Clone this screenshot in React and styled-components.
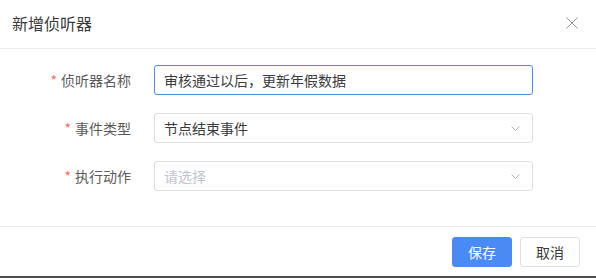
import React from "react";
import styled, { createGlobalStyle } from "styled-components";

const Global = createGlobalStyle`
  html, body { margin: 0; padding: 0; background: #fff; }
  body { font-family: "Noto Sans CJK SC", "Microsoft YaHei", sans-serif; }
  * { box-sizing: border-box; }
`;

const Dialog = styled.div`
  width: 596px;
  height: 278px;
  display: flex;
  flex-direction: column;
  background: #fff;
  border-bottom: 2px solid #4d4d4d;
`;

const Header = styled.div`
  height: 49px;
  display: flex;
  align-items: center;
  justify-content: space-between;
  padding: 0 18px 2px 12px;
  border-bottom: 1px solid #ebebeb;
`;

const Title = styled.div`
  font-size: 16px;
  color: #3a3a3a;
`;

const Close = styled.button`
  border: 0;
  background: none;
  padding: 0;
  width: 12px;
  height: 12px;
  display: flex;
  cursor: pointer;
`;

const Body = styled.div`
  flex: 1;
  display: flex;
  flex-direction: column;
  gap: 18px;
  padding-top: 16px;
`;

const Row = styled.div`
  display: flex;
  align-items: center;
  height: 30px;
`;

const Label = styled.label`
  width: 131px;
  text-align: right;
  font-size: 14px;
  color: #5a5a5a;
  margin-right: 23px;
  white-space: nowrap;
`;

const Star = styled.span`
  color: #f56c6c;
  margin-right: 4px;
  font-size: 14px;
`;

const Field = styled.div`
  width: 379px;
  height: 30px;
  border: 1px solid ${(p) => (p.$focus ? "#4a8af4" : "#dcdfe6")};
  border-radius: 3px;
  display: flex;
  align-items: center;
  justify-content: space-between;
  padding: 0 12px 0 9px;
  font-size: 14px;
  color: ${(p) => (p.$placeholder ? "#c0c4cc" : "#3a3a3a")};
`;

const Footer = styled.div`
  height: 50px;
  border-top: 1px solid #ebebeb;
  display: flex;
  align-items: center;
  justify-content: flex-end;
  gap: 8px;
  padding: 0 16px 0 0;
`;

const Button = styled.button`
  width: 60px;
  height: 30px;
  border-radius: 3px;
  font-size: 14px;
  font-family: inherit;
  border: 1px solid ${(p) => (p.$primary ? "#4a8af4" : "#dcdfe6")};
  background: ${(p) => (p.$primary ? "#4a8af4" : "#fff")};
  color: ${(p) => (p.$primary ? "#fff" : "#3a3a3a")};
  padding: 0;
`;

const Chevron = () => (
  <svg width="9" height="5" viewBox="0 0 9 5" fill="none">
    <path d="M0.5 0.5 L4.5 4.5 L8.5 0.5" stroke="#b0b3b8" strokeWidth="1" />
  </svg>
);

export default function App() {
  return (
    <>
      <Global />
      <Dialog>
        <Header>
          <Title>新增侦听器</Title>
          <Close>
            <svg width="12" height="12" viewBox="0 0 12 12">
              <path d="M0.5 0.5 L11.5 11.5 M11.5 0.5 L0.5 11.5" stroke="#909399" strokeWidth="1" />
            </svg>
          </Close>
        </Header>
        <Body>
          <Row>
            <Label><Star>*</Star>侦听器名称</Label>
            <Field $focus>审核通过以后，更新年假数据</Field>
          </Row>
          <Row>
            <Label><Star>*</Star>事件类型</Label>
            <Field>节点结束事件<Chevron /></Field>
          </Row>
          <Row>
            <Label><Star>*</Star>执行动作</Label>
            <Field $placeholder>请选择<Chevron /></Field>
          </Row>
        </Body>
        <Footer>
          <Button $primary>保存</Button>
          <Button>取消</Button>
        </Footer>
      </Dialog>
    </>
  );
}
